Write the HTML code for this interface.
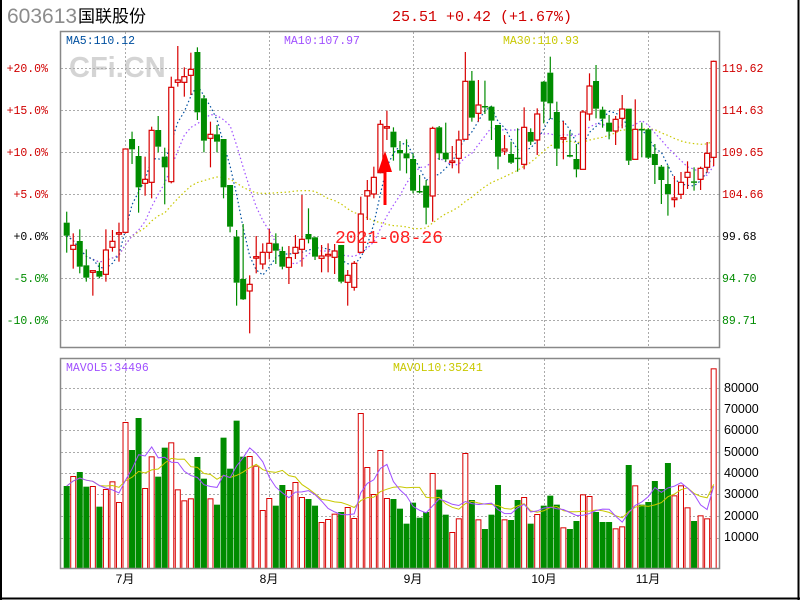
<!DOCTYPE html>
<html><head><meta charset="utf-8">
<style>
html,body{margin:0;padding:0;background:#fff;}
body{width:800px;height:600px;overflow:hidden;position:relative;}
svg{position:absolute;left:0;top:0;}
</style></head>
<body>
<svg id="s" width="800" height="600" xmlns="http://www.w3.org/2000/svg" font-family="'Liberation Mono','Noto Sans CJK SC',monospace">
<rect x="0" y="0" width="800" height="600" fill="#fff"/>
<line x1="1" y1="0" x2="1" y2="600" stroke="#000" stroke-width="2"/>
<line x1="798.5" y1="0" x2="798.5" y2="600" stroke="#000" stroke-width="2"/>
<line x1="0" y1="598.5" x2="800" y2="598.5" stroke="#000" stroke-width="2"/>
<text x="7" y="23" font-family="'Liberation Sans',sans-serif" font-size="21" fill="#8c8c8c">603613</text>
<text x="78" y="22" font-family="'Liberation Sans','Noto Sans CJK SC',sans-serif" font-size="17" fill="#000">国联股份</text>
<text x="392" y="21" font-size="15" fill="#d00000">25.51 +0.42 (+1.67%)</text>
<text x="69" y="77" font-family="'Liberation Sans',sans-serif" font-weight="bold" font-size="29" fill="#d4d4d4">CFi.CN</text>
<g id="grid" stroke="#aaa" stroke-dasharray="2,2" stroke-width="1"></g>
<g id="chart"></g>
<rect x="60.5" y="31.5" width="659" height="316" fill="none" stroke="#888" stroke-width="1.5"/>
<rect x="60.5" y="358.5" width="659" height="210" fill="none" stroke="#888" stroke-width="1.5"/>
<text x="66" y="44" font-size="11.5" fill="#0050a0">MA5:110.12</text>
<text x="284" y="44" font-size="11.5" fill="#a050ff">MA10:107.97</text>
<text x="503" y="44" font-size="11.5" fill="#c8c800">MA30:110.93</text>
<text x="66" y="371" font-size="11.5" fill="#a050ff">MAVOL5:34496</text>
<text x="393" y="371" font-size="11.5" fill="#c8c800">MAVOL10:35241</text>
<g font-size="11.5" text-anchor="end">
<text x="48" y="72" fill="#d00000">+20.0%</text>
<text x="48" y="114" fill="#d00000">+15.0%</text>
<text x="48" y="156" fill="#d00000">+10.0%</text>
<text x="48" y="198" fill="#d00000">+5.0%</text>
<text x="48" y="240" fill="#000">+0.0%</text>
<text x="48" y="282" fill="#008c00">-5.0%</text>
<text x="48" y="324" fill="#008c00">-10.0%</text>
</g>
<g font-size="11.5">
<text x="722" y="72" fill="#d00000">119.62</text>
<text x="722" y="114" fill="#d00000">114.63</text>
<text x="722" y="156" fill="#d00000">109.65</text>
<text x="722" y="198" fill="#d00000">104.66</text>
<text x="722" y="240" fill="#000">99.68</text>
<text x="722" y="282" fill="#008c00">94.70</text>
<text x="722" y="324" fill="#008c00">89.71</text>
</g>
<g font-family="'Liberation Sans',sans-serif" font-size="12.5" fill="#000">
<text x="724" y="392">80000</text>
<text x="724" y="413">70000</text>
<text x="724" y="434">60000</text>
<text x="724" y="456">50000</text>
<text x="724" y="477">40000</text>
<text x="724" y="498">30000</text>
<text x="724" y="520">20000</text>
<text x="724" y="541">10000</text>
</g>
<g font-family="'Liberation Sans','Noto Sans CJK SC',sans-serif" font-size="12" fill="#000" text-anchor="middle">
<text x="125" y="583">7月</text>
<text x="269" y="583">8月</text>
<text x="413" y="583">9月</text>
<text x="544" y="583">10月</text>
<text x="648" y="583">11月</text>
</g>
<text x="335" y="243" font-size="18" fill="#ff2020">2021-08-26</text>
<line x1="385" y1="168" x2="385" y2="205" stroke="#ff0000" stroke-width="3"/>
<polygon points="385,151 378,172 392,172" fill="#ff0000"/>
</svg>
<script>
var NS="http://www.w3.org/2000/svg";
function el(p,t,a){var e=document.createElementNS(NS,t);for(var k in a)e.setAttribute(k,a[k]);p.appendChild(e);return e;}
var grid=document.getElementById('grid'),ch=document.getElementById('chart');
[68,110,152,194,236,278,320].forEach(function(y){el(grid,'line',{x1:61,x2:719,y1:y+.5,y2:y+.5});});
[388,409,430,452,473,494,516,538].forEach(function(y){el(grid,'line',{x1:61,x2:719,y1:y+.5,y2:y+.5});});
[125,269,413,544,648].forEach(function(x){el(grid,'line',{x1:x+.5,x2:x+.5,y1:32,y2:347});el(grid,'line',{x1:x+.5,x2:x+.5,y1:359,y2:568});});
var A=[['g',548,587,515,638],['r',616,628,580,686],['g',603,680,568,700],['g',676,713,628,725],['r',692,697,692,767],['g',693,710,668,715],['r',630,703,568,725],['r',604,622,570,635],['r',578,582,548,665],['r',327,577,327,580],
['g',297,328,275,372],['g',348,442,318,518],['r',418,430,350,467],['r',271,427,260,475],['g',270,320,228,337],['g',350,382,323,493],['r',142,425,110,430],['r',120,127,18,140],['r',110,127,82,170],['r',88,106,38,165],
['g',36,217,22,240],['g',175,302,165,337],['r',283,295,245,382],['g',283,305,255,337],['g',297,442,297,475],['g',435,560,435,577],['g',590,728,570,797],['g',717,778,552,780],['r',733,753,706,880],['r',650,653,588,700],
['r',637,672,610,688],['r',610,637,567,658],['g',610,632,580,672],['g',633,680,620,688],['r',653,682,618,732],['r',622,640,585,657],['r',598,628,465,680],['g',582,598,505,610],['g',592,650,590,660],['r',648,655,615,697],
['r',643,647,610,697],['r',633,652,612,702],['g',615,725,615,730],['r',706,727,690,797],['r',670,742,663,752],['r',522,637,470,640],['r',452,468,420,540],['r',412,462,380,475],['r',253,398,240,400],['r',260,264,212,300]];
var B=[['g',275,322,262,362],['g',330,340,303,392],['g',340,355,298,400],['g',357,452,340,460],['g',453,457,405,460],['g',437,503,420,553],['r',265,468,260,545],['g',262,340,258,360],['g',338,358,248,365],['r',363,367,318,385],
['r',300,355,272,400],['r',124,298,36,298],['g',122,233,93,245],['r',195,220,120,245],['g',198,202,122,222],['g',200,242,197,300],['g',255,350,255,388],['r',327,333,285,345],['g',342,368,305,372],['g',353,357,265,395],
['r',262,373,202,388],['g',276,305,265,315],['r',222,300,205,345],['g',125,185,123,250],['g',98,190,50,237],['g',216,326,185,378],['r',293,297,243,358],['g',345,350,272,352],['g',357,388,312,412],['r',216,388,210,388],
['r',138,222,100,242],['g',123,206,75,235],['g',209,236,200,263],['g',248,275,225,298],['r',238,273,228,315],['r',207,235,165,265],['g',206,362,206,375],['r',268,358,178,358],['g',267,270,248,352],['g',268,353,265,357],
['g',342,375,312,432],['g',380,420,375,492],['g',432,462,376,527],['r',474,479,408,502],['r',427,463,396,477],['r',397,412,364,447],['g',424,428,382,452],['r',385,418,380,450],['r',340,382,306,398],['r',64,352,62,378]];
var C=A.concat(B).map(function(c){return [c[0],40+c[1]/3,40+c[2]/3,40+c[3]/3,40+c[4]/3];});
var V3=[438,408,396,440,438,500,447,424,486,246,330,234,444,349,410,323,307,448,481,475,351,416,475,494,293,386,242,350,348,377,510,474,497,435,450,426,471,477,497,546,537,521,516,501,534,219,381,462,330,474,477];
var V6=[506,551,488,533,516,399,449,524,576,535,339,480,538,567,524,435,538,540,480,471,551,522,497,467,494,562,567,543,463,468,516,546,546,565,559,375,436,494,486,423,447,369,466,436,502,543,526,535,85];
var V=V3.map(function(v){return 340+v/3;}).concat(V6.map(function(v){return 340+v/3;}));
var RED='#d80000',GRN='#008c00';
function X(i){return 66.7+i*6.535;}
function ma(arr,n){return arr.map(function(v,i){var s=0,c=0;for(var j=Math.max(0,i-n+1);j<=i;j++){s+=arr[j];c++;}return s/c;});}
function pl(arr,col,dash,w){var d=arr.map(function(v,i){return (i?'L':'M')+X(i).toFixed(1)+' '+v.toFixed(1);}).join('');var a={d:d,fill:'none',stroke:col,'stroke-width':w||1};if(dash)a['stroke-dasharray']=dash;el(ch,'path',a);}
var closes=C.map(function(c){return c[0]=='r'?c[1]:c[2];});
var vb=V.map(function(v){return 569-v;});
for(var i=0;i<V.length&&i<C.length;i++){var x=X(i),col=C[i][0]=='r';
 if(col)el(ch,'rect',{x:x-2.5,y:V[i]+.5,width:5,height:568-V[i],fill:'#fff',stroke:RED,'stroke-width':1});
 else el(ch,'rect',{x:x-3,y:V[i],width:6,height:569-V[i],fill:GRN});}
pl(ma(vb,10).map(function(v){return 569-v;}),'#c8c800',null,1);
pl(ma(vb,5).map(function(v){return 569-v;}),'#a050ff',null,1);
pl(ma(closes,30),'#c8c800','1.5,2.5',1.2);
pl(ma(closes,10),'#a050ff','1.5,2.5',1.2);
pl(ma(closes,5),'#0050a0','1.5,2.5',1.2);
C.forEach(function(c,i){var x=X(i),r=c[0]=='r',cl=r?RED:GRN;
 var t=c[1],b=c[2];if(b-t<1.5){b=t+1.5;}
 el(ch,'line',{x1:x,x2:x,y1:c[3],y2:t,stroke:cl,'stroke-width':1.2});
 el(ch,'line',{x1:x,x2:x,y1:b,y2:c[4],stroke:cl,'stroke-width':1.2});
 if(r)el(ch,'rect',{x:x-2.5,y:t,width:5,height:b-t,fill:'#fff',stroke:cl,'stroke-width':1.2});
 else el(ch,'rect',{x:x-3,y:t,width:6,height:b-t,fill:cl});});
</script>
</body></html>
